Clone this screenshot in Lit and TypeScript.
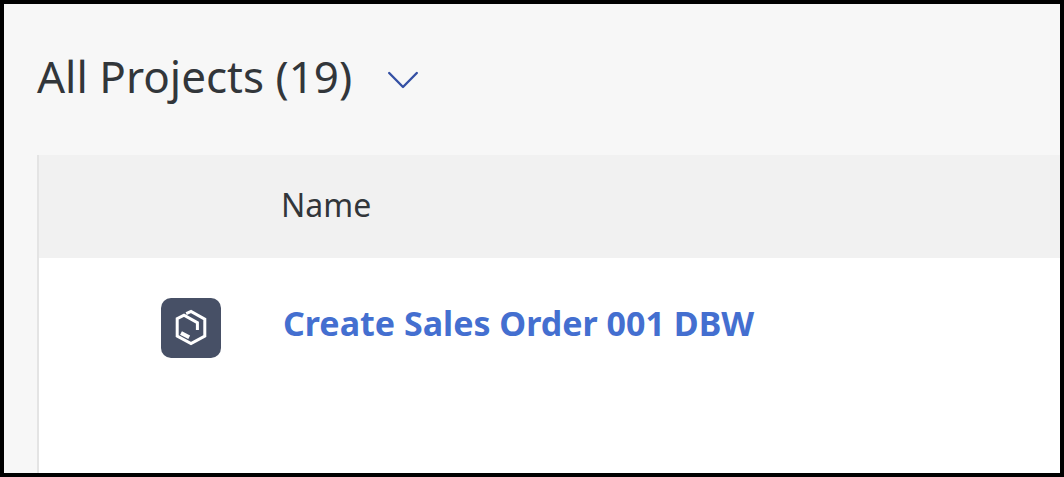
import { LitElement, html, css } from "lit";
import { customElement, property } from "lit/decorators.js";

interface Project {
  name: string;
}

@customElement("project-table")
class ProjectTable extends LitElement {
  @property({ attribute: false }) projects: Project[] = [];

  static styles = css`
    :host {
      display: block;
      background: #ffffff;
      border-left: 2px solid #e4e4e4;
    }
    .table {
      width: 100%;
      border-collapse: collapse;
      table-layout: fixed;
    }
    .icon-col {
      width: 242px;
    }
    .head {
      box-sizing: border-box;
      height: 103px;
      padding: 0 0 4px;
      background: #f1f1f1;
      color: #32363a;
      font-size: 32px;
      font-weight: 400;
      line-height: 44px;
      text-align: left;
    }
    .cell {
      height: 60px;
      padding: 40px 0;
      vertical-align: top;
    }
    .icon-cell {
      padding-left: 122px;
    }
    .badge {
      display: block;
      width: 60px;
      height: 60px;
    }
    .link {
      display: block;
      padding-left: 2px;
      color: #446fd0;
      font-size: 34px;
      font-weight: 700;
      line-height: 50px;
      text-decoration: none;
      white-space: nowrap;
    }
    .link:hover {
      text-decoration: underline;
    }
  `;

  render() {
    return html`
      <table class="table">
        <colgroup>
          <col class="icon-col" />
          <col />
        </colgroup>
        <thead>
          <tr>
            <td class="head"></td>
            <th class="head" scope="col">Name</th>
          </tr>
        </thead>
        <tbody>
          ${this.projects.map(
            (p) => html`
              <tr>
                <td class="cell icon-cell">
                  <svg class="badge" viewBox="0 0 60 60" aria-hidden="true">
                    <rect width="60" height="60" rx="10" fill="#475066" />
                    <g fill="none" stroke="#fff" stroke-width="3">
                      <path d="M25.2 15.6 L30 13.4 L43.8 21.2 V38 L30 45.6 L16.2 38 V20.6 L23 17.2 L36.4 24.6 V32" />
                      <path d="M20 35 L28.2 39.2" stroke-width="4" />
                    </g>
                  </svg>
                </td>
                <td class="cell"><a class="link" href="#">${p.name}</a></td>
              </tr>
            `
          )}
        </tbody>
      </table>
    `;
  }
}

@customElement("app-root")
class AppRoot extends LitElement {
  static styles = css`
    :host {
      display: flex;
      flex-direction: column;
      box-sizing: border-box;
      min-height: 100vh;
      border: 4px solid #000000;
      background: #f7f7f7;
      color: #32363a;
      font-family: "Noto Sans", "Open Sans", sans-serif;
    }
    .header {
      padding: 42px 33px 49px;
    }
    .title {
      margin: 0;
      font-size: 44px;
      font-weight: 400;
      line-height: 60px;
    }
    .variant {
      display: flex;
      align-items: center;
      gap: 36px;
      padding: 0;
      border: 0;
      background: none;
      color: inherit;
      font: inherit;
      cursor: pointer;
    }
    .chevron {
      width: 30px;
      height: 18px;
      padding-top: 8px;
    }
    .list {
      flex: 1;
      margin-left: 33px;
    }
  `;

  private projects: Project[] = [{ name: "Create Sales Order 001 DBW" }];

  render() {
    return html`
      <header class="header">
        <h1 class="title">
          <button class="variant" type="button" aria-haspopup="listbox">
            All Projects (19)
            <svg class="chevron" viewBox="0 0 30 18" aria-hidden="true">
              <path
                d="M1.2 2 L15 16 L28.8 2"
                fill="none"
                stroke="#3450a4"
                stroke-width="2.4"
                stroke-linecap="round"
                stroke-linejoin="round"
              />
            </svg>
          </button>
        </h1>
      </header>
      <project-table class="list" .projects=${this.projects}></project-table>
    `;
  }
}
